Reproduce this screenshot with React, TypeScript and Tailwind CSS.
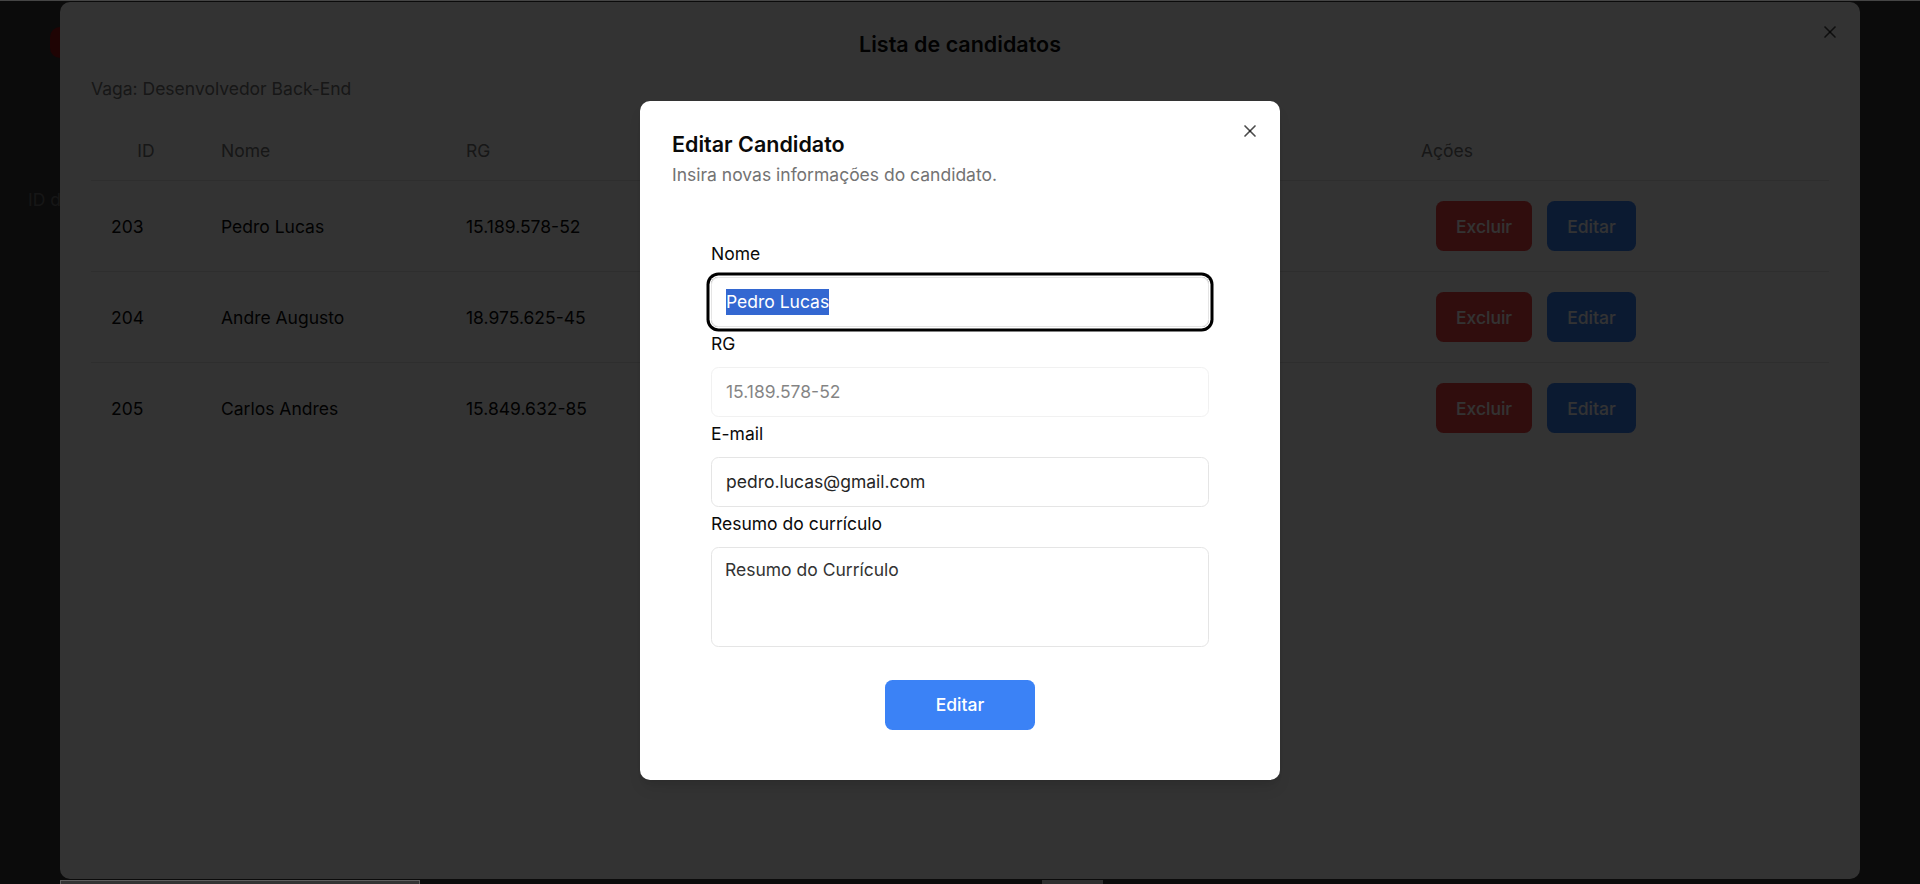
import { X } from 'lucide-react';

interface Candidate {
    id: number;
    name: string;
    rg: string;
}

const candidates: Candidate[] = [
    { id: 203, name: 'Pedro Lucas', rg: '15.189.578-52' },
    { id: 204, name: 'Andre Augusto', rg: '18.975.625-45' },
    { id: 205, name: 'Carlos Andres', rg: '15.849.632-85' },
];

const Field = ({ label, children }: { label: string; children: React.ReactNode }) => (
    <div>
        <label className="block text-[17.5px] leading-[25px] font-normal text-[#0a0a0a]">{label}</label>
        <div className="mt-[11px]">{children}</div>
    </div>
);

export default function App() {
    return (
        <div className="min-h-screen bg-[#373737] font-[Inter,sans-serif]">
            {/* page behind the dialogs */}
            <div className="pt-[27px]">
                <div className="ml-[50px] h-[31px] w-[50px] rounded-[10px] bg-[#9b1414]" />
                <p className="ml-[28px] mt-[129px] text-[17.5px] leading-[25px] text-[#707070]">ID da vaga: 12</p>
            </div>

            {/* candidates list dialog */}
            <div className="fixed inset-0 flex justify-center pt-[2px]">
                <div className="relative h-[877px] w-[1800px] rounded-[10px] bg-white px-[31px] pt-[31px]">
                    <button className="absolute right-5 top-5 text-black/70">
                        <X size={20} />
                    </button>
                    <h2 className="text-center text-[21.5px] leading-[22.5px] font-semibold text-[#0a0a0a]">
                        Lista de candidatos
                    </h2>
                    <p className="mt-[20px] text-[17.5px] leading-[25px] text-[#737373]">Vaga: Desenvolvedor Back-End</p>

                    <table className="mt-[20px] w-full table-fixed border-collapse text-[17.5px] leading-[25px]">
                        <thead>
                            <tr className="border-b border-[#e5e5e5]">
                                <th className="h-[60px] w-[110px] px-5 text-center font-normal text-[#737373]">ID</th>
                                <th className="h-[60px] w-[245px] px-5 text-left font-normal text-[#737373]">Nome</th>
                                <th className="h-[60px] w-[300px] px-5 text-left font-normal text-[#737373]">RG</th>
                                <th className="h-[60px] w-[655px] px-5" />
                                <th className="h-[60px] w-[428px] px-5 text-left font-normal text-[#737373]">Ações</th>
                            </tr>
                        </thead>
                        <tbody>
                            {candidates.map((c) => (
                                <tr key={c.id} className="border-b border-[#e5e5e5] last:border-0">
                                    <td className="px-5 py-5 text-[#0a0a0a]">{c.id}</td>
                                    <td className="px-5 py-5 text-[#0a0a0a]">{c.name}</td>
                                    <td className="px-5 py-5 text-[#0a0a0a]">{c.rg}</td>
                                    <td className="px-5 py-5" />
                                    <td className="px-5 py-5">
                                        <div className="ml-[15px] flex gap-[15px]">
                                            <button className="h-[50px] rounded-[7.5px] bg-[#ef4444] px-5 font-medium text-white">
                                                Excluir
                                            </button>
                                            <button className="h-[50px] rounded-[7.5px] bg-[#3b82f6] px-5 font-medium text-white">
                                                Editar
                                            </button>
                                        </div>
                                    </td>
                                </tr>
                            ))}
                        </tbody>
                    </table>
                </div>
            </div>

            {/* overlay */}
            <div className="fixed inset-0 bg-black/80" />

            {/* edit dialog */}
            <div className="fixed inset-0 flex items-center justify-center">
                <div className="relative -mt-[3px] w-[640px] rounded-[10px] bg-white px-8 pt-8 pb-[50px] shadow-lg">
                    <button className="absolute right-5 top-5 text-black/70">
                        <X size={20} />
                    </button>
                    <h2 className="text-[21.5px] leading-[22.5px] font-semibold text-[#0a0a0a]">Editar Candidato</h2>
                    <p className="mt-[6px] text-[17.5px] leading-[25px] text-[#737373]">
                        Insira novas informações do candidato.
                    </p>

                    <form className="mx-auto mt-[54px] flex w-[498px] flex-col gap-1">
                        <Field label="Nome">
                            <div className="flex h-[50px] items-center rounded-[7.5px] border border-[#e5e5e5] px-[14px] text-[17.5px] shadow-[0_0_0_1.5px_#fff,0_0_0_4.5px_#000]">
                                <span className="bg-[#3367d1] text-white">Pedro Lucas</span>
                            </div>
                        </Field>
                        <Field label="RG">
                            <input
                                disabled
                                value="15.189.578-52"
                                readOnly
                                className="h-[50px] w-full rounded-[7.5px] border border-[#e5e5e5] bg-white px-[14px] text-[17.5px] text-[#0a0a0a] opacity-50"
                            />
                        </Field>
                        <Field label="E-mail">
                            <input
                                value="pedro.lucas@gmail.com"
                                readOnly
                                className="h-[50px] w-full rounded-[7.5px] border border-[#e5e5e5] bg-white px-[14px] text-[17.5px] text-[#262626] outline-none"
                            />
                        </Field>
                        <Field label="Resumo do currículo">
                            <textarea
                                value="Resumo do Currículo"
                                readOnly
                                className="block h-[100px] w-full resize-none rounded-[7.5px] border border-[#e5e5e5] bg-white px-[13px] py-[9px] text-[17.5px] leading-[25px] text-[#333] outline-none"
                            />
                        </Field>
                    </form>

                    <div className="mt-[33px] flex justify-center">
                        <button className="h-[50px] w-[150px] rounded-[7.5px] bg-[#3b82f6] text-[17.5px] font-medium text-white">
                            Editar
                        </button>
                    </div>
                </div>
            </div>

            {/* browser chrome bits */}
            <div className="fixed left-0 right-0 top-0 h-px bg-[#454545]" />
            <div className="fixed bottom-0 left-[60px] h-[4px] w-[360px] border-x border-t border-[#5f5f5f] bg-[#343434]" />
            <div className="fixed bottom-0 left-[1042px] h-[4px] w-[61px] bg-[#2f2f2f]" />
        </div>
    );
}
